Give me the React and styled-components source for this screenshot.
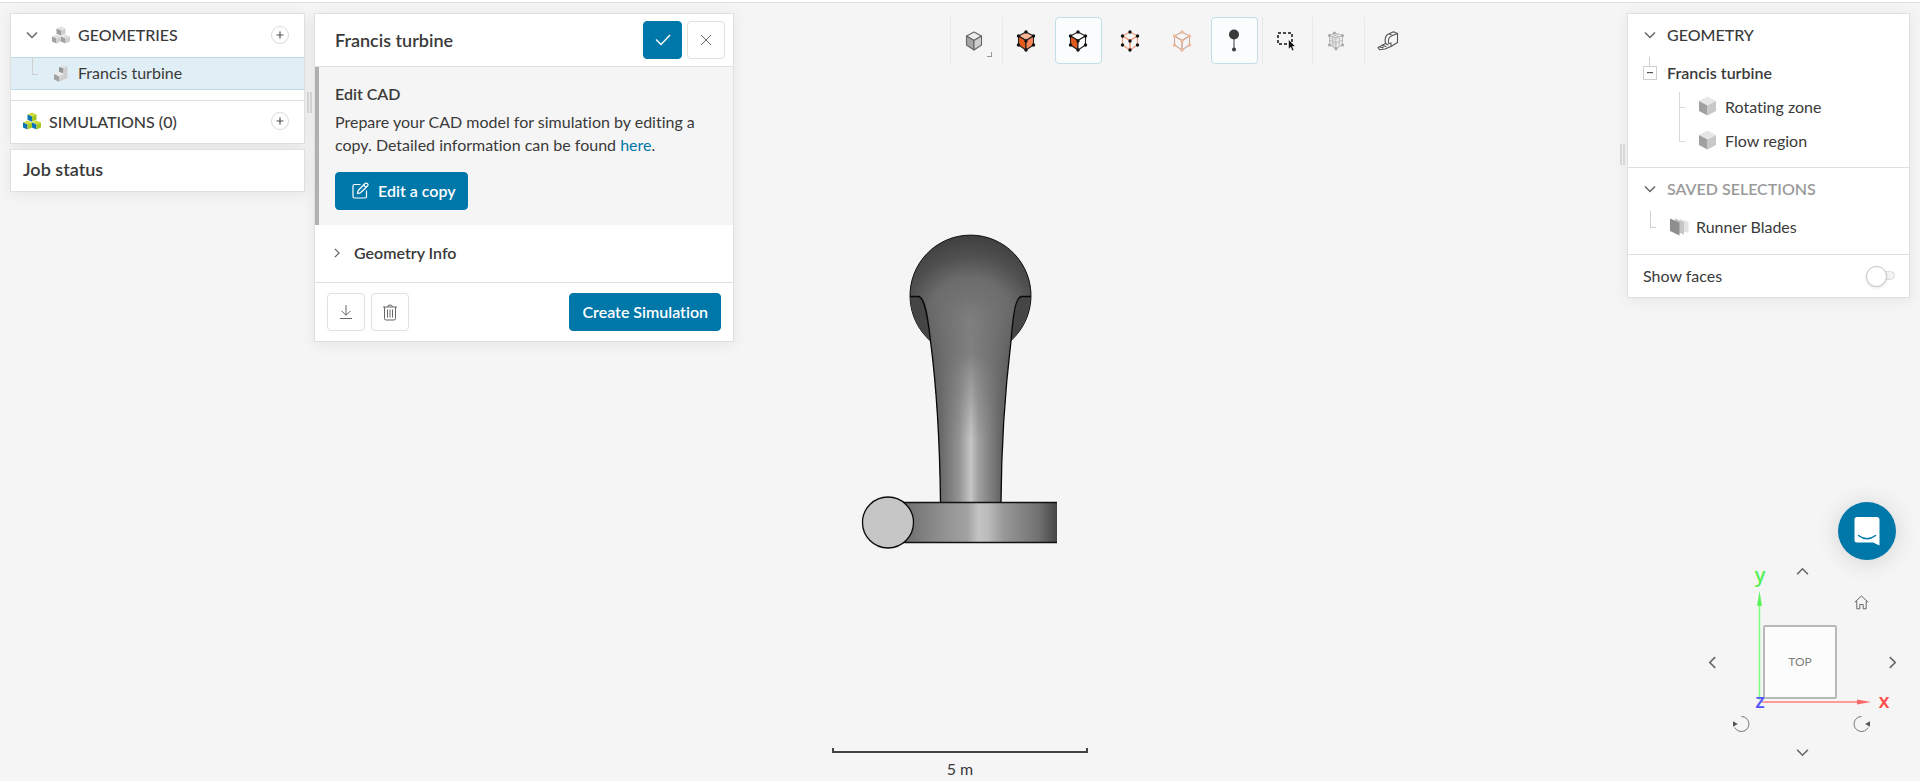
import React, { useState } from 'react'
import styled, { createGlobalStyle, css } from 'styled-components'

const BLUE = '#0077a9'
const TEXT = '#3a3a3a'
const LINE = '#e0e0e0'

const GlobalStyle = createGlobalStyle`
  * { box-sizing: border-box; }
  body {
    margin: 0;
    background: #f5f5f5;
    color: ${TEXT};
    font-family: Lato, sans-serif;
    font-size: 16px;
    line-height: 23px;
    font-variant-ligatures: none;
  }
  button { font: inherit; padding: 0; cursor: pointer; }
  svg { display: block; flex: none; }
`

const Page = styled.div`
  position: relative;
  min-height: 100vh;
  display: flex;
  flex-direction: column;
  overflow: hidden;
`

const TopStrip = styled.header`
  height: 3px;
  background: #fff;
  border-bottom: 1px solid ${LINE};
`

/* 3D viewer, lies under the panels */
const Viewer = styled.div`
  position: absolute;
  inset: 0;
  display: grid;
  place-items: center;
  padding-bottom: 2px;
`

const Scale = styled.div`
  position: absolute;
  left: 50%;
  bottom: 1px;
  width: 256px;
  margin-left: -128px;
  text-align: center;
`

const ScaleBar = styled.div`
  height: 5px;
  margin-bottom: 4px;
  border: 2px solid #444;
  border-top: 0;
`

const Workspace = styled.main`
  position: relative;
  flex: 1;
  display: grid;
  grid-template-columns: 295px 419px minmax(0, 1fr) 283px;
  padding: 10px 10px 19px;
`

const Column = styled.div`
  position: relative;
  display: flex;
  flex-direction: column;
  gap: 5px;
`

const MiddleColumn = styled(Column)`
  margin: 0 -10px 0 9px;
`

const Handle = styled.div`
  position: absolute;
  top: ${(p) => p.$top}px;
  ${(p) => p.$side}: -7px;
  width: 5px;
  height: 21px;
  border: solid #d6d6d6;
  border-width: 0 2px;
`

const Card = styled.section`
  background: #fff;
  border: 1px solid ${LINE};
  box-shadow: 0 2px 14px rgba(0, 0, 0, 0.07);
`

const Row = styled.div`
  display: flex;
  align-items: center;
  height: ${(p) => p.$height || 43}px;
  padding: 0 15px 2px ${(p) => p.$indent || 12}px;
  ${(p) => p.$line && css`border-top: 1px solid ${LINE};`}
  ${(p) => p.$spaced && css`margin-top: ${p.$spaced}px;`}
  ${(p) => p.$selected && css`
    background: #e0eef5;
    border-top: 1px solid #bcdae3;
    border-bottom: 1px solid #bcdae3;
  `}
`

const IconSlot = styled.span`
  display: flex;
  justify-content: center;
  width: ${(p) => p.$width}px;
  flex: none;
`

const Label = styled.span`
  flex: 1;
  font-weight: ${(p) => p.$weight || 400};
  color: ${(p) => p.$color || TEXT};
`

const Heading = styled.h2`
  margin: 0;
  flex: 1;
  font-size: 18px;
  font-weight: 600;
`

const PlusButton = styled.button`
  display: grid;
  place-items: center;
  width: 18px;
  height: 18px;
  background: #fff;
  border: 1px solid #d5dce2;
  border-radius: 50%;
`

const ExpandButton = styled.button`
  display: grid;
  place-items: center;
  width: 14px;
  height: 14px;
  background: #fff;
  border: 1px solid #cfcfcf;
`

const ChevronButton = styled.button`
  display: grid;
  place-items: center;
  width: 14px;
  height: 14px;
  background: none;
  border: 0;
`

/* tree connector: vertical line with a foot */
const Elbow = styled.span`
  align-self: flex-start;
  flex: none;
  width: 6px;
  height: 17px;
  margin-right: ${(p) => p.$gap}px;
  border-left: 1px solid #d0d0d0;
  border-bottom: 1px solid #d0d0d0;
`

const Stem = styled.span`
  position: absolute;
  left: 6px;
  top: -9px;
  height: 9px;
  border-left: 1px solid #d0d0d0;
`

const ExpandSlot = styled.span`
  position: relative;
  width: 24px;
  margin-left: 3px;
`

const Children = styled.div`
  position: relative;
  padding-bottom: 9px;
`

const ChildLine = styled.span`
  position: absolute;
  left: 51px;
  top: 2px;
  width: 6px;
  height: 16px;
  border-left: 1px solid #d8d8d8;
  border-bottom: 1px solid #d8d8d8;
  ${(p) => p.$second && css`height: 50px;`}
`

const PanelHeader = styled.header`
  display: flex;
  align-items: center;
  gap: 5px;
  height: 53px;
  padding: 0 8px 0 20px;
  border-bottom: 1px solid ${LINE};
`

const Button = styled.button`
  display: inline-flex;
  align-items: center;
  justify-content: center;
  gap: 9px;
  min-width: ${(p) => (p.$primary ? 39 : 38)}px;
  height: 38px;
  padding: ${(p) => p.$pad || '0'};
  border-radius: 4px;
  font-weight: 600;
  border: 1px solid ${(p) => (p.$primary ? BLUE : LINE)};
  background: ${(p) => (p.$primary ? BLUE : '#fff')};
  color: ${(p) => (p.$primary ? '#fff' : '#5a5a5a')};
`

const EditBox = styled.div`
  padding: 15px 20px 15px 16px;
  background: #f5f5f5;
  border-left: 4px solid #b0b0b0;
`

const SubTitle = styled.h3`
  margin: 0 0 5px;
  font-size: 16px;
  font-weight: 600;
`

const Text = styled.p`
  margin: 0 0 16px;
`

const Link = styled.a`
  color: ${BLUE};
  text-decoration: none;
`

const InfoToggle = styled.button`
  display: flex;
  align-items: center;
  gap: 12px;
  width: 100%;
  height: 57px;
  padding: 0 0 2px 17px;
  border: 0;
  background: #fff;
  color: ${TEXT};
  font-weight: 600;
`

const PanelFooter = styled.footer`
  display: flex;
  gap: 6px;
  padding: 10px 12px;
  border-top: 1px solid ${LINE};
`

const Spacer = styled.span`
  flex: 1;
`

const Toolbar = styled.nav`
  justify-self: center;
  align-self: start;
  display: flex;
  margin-top: 4px;
  margin-left: 10px;
`

const ToolSlot = styled.span`
  flex: none;
  width: ${(p) => p.$width || 52}px;
  height: 47px;
  border-left: 1px solid ${(p) => (p.$line ? '#e8e8e8' : 'transparent')};
`

const Tool = styled.button`
  position: relative;
  display: grid;
  place-items: center;
  width: 47px;
  height: 47px;
  border: 1px solid ${(p) => (p.$active ? '#c3dde8' : 'transparent')};
  border-radius: 4px;
  background: ${(p) => (p.$active ? '#fafcfd' : 'transparent')};
`

const Corner = styled.i`
  position: absolute;
  right: 5px;
  bottom: 6px;
  width: 5px;
  height: 5px;
  border: solid #999;
  border-width: 0 1px 1px 0;
`

const SwitchLabel = styled.label`
  display: flex;
  align-items: center;
  height: 43px;
  padding: 0 14px 2px 15px;
  border-top: 1px solid ${LINE};
  margin-top: 10px;
`

const Switch = styled.input`
  appearance: none;
  position: relative;
  width: 29px;
  height: 19px;
  margin: 0;
  &::before {
    content: '';
    position: absolute;
    inset: 5px 0 5px 10px;
    border: 1px solid #ddd;
    border-radius: 5px;
    background: #f3f3f3;
  }
  &::after {
    content: '';
    position: absolute;
    left: ${(p) => (p.checked ? 10 : 0)}px;
    top: 0;
    width: 19px;
    height: 19px;
    border: 1px solid #c4c4c4;
    border-radius: 50%;
    background: #fff;
    box-shadow: 0 1px 3px rgba(0, 0, 0, 0.12);
  }
`

const ChatButton = styled.button`
  display: grid;
  place-items: center;
  align-self: flex-end;
  width: 58px;
  height: 58px;
  margin: auto 14px 0 0;
  border: 0;
  border-radius: 50%;
  background: ${BLUE};
  box-shadow: 0 2px 24px rgba(0, 0, 0, 0.14);
`

const Navigator = styled.div`
  position: relative;
  align-self: flex-end;
  display: grid;
  grid-template: 18px 44px 76px 48px 8px / 20px 41px 78px 41px 20px;
  place-items: center;
  margin: -3px 8px 0 0;
  padding-bottom: 6px;
`

const NavButton = styled.button`
  grid-area: ${(p) => p.$area};
  display: grid;
  place-items: center;
  width: 20px;
  height: 20px;
  border: 0;
  background: none;
`

const CubeFace = styled.button`
  grid-area: 3 / 3;
  justify-self: start;
  width: 74px;
  height: 74px;
  padding-bottom: 1px;
  border: 2px solid #b9b9b9;
  border-radius: 2px;
  background: #fcfcfc;
  color: #808080;
  font-size: 12px;
`

const Axes = styled.svg`
  position: absolute;
  inset: 0;
  overflow: visible;
  pointer-events: none;
  font-family: 'Open Sans', sans-serif;
  font-size: 20px;
  font-weight: 600;
`

const Chevron = ({ dir = 'down', size = 12, color = '#666' }) => {
  const paths = { down: 'M1 3.5 6 8.5 11 3.5', up: 'M1 8.5 6 3.5 11 8.5', left: 'M8.5 1 3.5 6 8.5 11', right: 'M3.5 1 8.5 6 3.5 11' }
  return (
    <svg width={size} height={size} viewBox="0 0 12 12" fill="none" stroke={color} strokeWidth="1.5">
      <path d={paths[dir]} />
    </svg>
  )
}

const Plus = () => (
  <svg width="8" height="8" viewBox="0 0 8 8" stroke="#555" strokeWidth="1.200"><path d="M4 .5V7.5M.5 4H7.5" /></svg>
)

const Block = ({ x, y, top, left, right }) => (
  <g transform={`translate(${x} ${y})`}>
    <path fill={top} d="M0 2 4.5 0 9 2 4.5 4Z" />
    <path fill={left} d="M0 2 4.5 4V9.2L0 7.2Z" />
    <path fill={right} d="M9 2 4.5 4V9.2L9 7.2Z" />
  </g>
)

const Blocks = ({ top, left, right }) => (
  <svg width="18" height="18" viewBox="0 0 18 18">
    <Block x={4.5} y={0.5} top={top} left={left} right={right} />
    <Block x={0} y={8.4} top={top} left={left} right={right} />
    <Block x={9} y={8.4} top={top} left={left} right={right} />
  </svg>
)

const PartIcon = () => (
  <svg width="14" height="18" viewBox="0 0 14 18">
    <path fill="#e4e4e4" d="M5 3 9.500 1 13.500 2.300 9.500 4.300Z" />
    <path fill="#969696" d="M5 3 9.500 4.300V9.500L5 8Z" />
    <path fill="#d0d0d0" d="M9.500 4.300 13.500 2.300V14L5 17.700V12.500L9.500 10Z" />
    <path fill="#ececec" d="M0 10 5 8 9.500 9.800 5 12.200Z" />
    <path fill="#a2a2a2" d="M0 10 5 12.200V17.700L0 15.500Z" />
  </svg>
)

const SolidCube = () => (
  <svg width="17" height="20" viewBox="0 0 17 20">
    <path fill="#e6e6e6" d="M8.500 .5 17 5 8.500 9.500 0 5Z" />
    <path fill="#a0a0a0" d="M0 5 8.500 9.500V19.500L0 15Z" />
    <path fill="#c8c8c8" d="M17 5 8.500 9.500V19.500L17 15Z" />
  </svg>
)

const FacesIcon = () => (
  <svg width="19" height="18" viewBox="0 0 19 18">
    <path fill="#e2e2e2" d="M10 1 18.500 4V15L10 12Z" />
    <path fill="#c6c6c6" d="M5 .5 14 4V16.500L5 13Z" />
    <path fill="#8e8e8e" d="M0 .5 9.500 4.500V17.500L0 13Z" />
  </svg>
)

const nodes = [[10, 2], [17.5, 6], [17.5, 15], [10, 20], [2.5, 15], [2.5, 6], [10, 11]]

const NodeCube = ({ top = 'none', left = 'none', right = 'none', stroke, node }) => (
  <svg width="20" height="22" viewBox="0 0 20 22" strokeWidth="1.100" stroke={stroke} strokeLinejoin="round">
    <path fill={top} d="M10 2 17.500 6 10 10.500 2.500 6Z" />
    <path fill={left} d="M2.500 6 10 10.500V20L2.500 15Z" />
    <path fill={right} d="M17.500 6 10 10.500V20L17.500 15Z" />
    {node && nodes.map(([x, y]) => <circle key={x + '-' + y} cx={x} cy={y} r="1.7" fill={node} stroke="none" />)}
  </svg>
)

const PinIcon = () => (
  <svg width="12" height="23" viewBox="0 0 12 23" fill="#3a3a3a">
    <circle cx="6" cy="5.500" r="5" />
    <path d="M5.500 8H6.500V20H5.500Z" />
    <circle cx="6" cy="20.500" r="2" />
  </svg>
)

const BoxSelectIcon = () => (
  <svg width="20" height="20" viewBox="0 0 20 20">
    <rect x="2" y="2" width="14" height="11" fill="none" stroke="#111" strokeWidth="1.500" strokeDasharray="3 2" />
    <path fill="#111" stroke="#f5f5f5" strokeWidth=".6" d="M12.500 8.500V18L14.700 16.200 16.200 19.700 17.900 18.900 16.400 15.600 19.300 15.300Z" />
  </svg>
)

const MeshIcon = () => (
  <svg width="18" height="20" viewBox="0 0 18 20" fill="none" stroke="#bcbcbc">
    <path fill="#e2e2e2" d="M2.500 4.500 9 7V17.500L2.500 14Z" />
    <path fill="#ededed" d="M9 7 15.500 4.500V14L9 17.500Z" />
    <path d="M2.500 4.500 7.500 2 15.500 4.500M5 3.200 12 6M11.500 3.200 5.800 6M2.500 9 9 12 15.500 9M5.800 6V15.700M12.200 6V15.700" />
    <g fill="#aaa" stroke="none">
      <circle cx="7.500" cy="2" r="1.600" /><circle cx="15.500" cy="4.500" r="1.600" /><circle cx="2.500" cy="4.500" r="1.600" />
      <circle cx="15.500" cy="14" r="1.600" /><circle cx="2.500" cy="14" r="1.600" /><circle cx="9" cy="17.700" r="1.600" />
    </g>
  </svg>
)

/* tape measure: case on the right, strip running out to the lower left */
const TapeIcon = () => (
  <svg width="22" height="20" viewBox="0 0 22 20" fill="none" stroke="#555" strokeWidth="1.100" strokeLinejoin="round">
    <path d="M8.500 12.500Q7 4.500 12 2.800L16.500 .8 20.500 2.500V11.500L14 15.500" />
    <path d="M20.500 2.500 15.500 4.500Q10.500 6 11.500 12.500M12 2.800 15.500 4.500M14 15.500V12L11.500 12.500" />
    <path d="M8.500 12.500 1 16.500 2.500 18.800 8 18 14 15.500M3 16.200 6.500 16.600M5.500 14.600 9.500 15.500M8.500 12.500 11.500 14" />
  </svg>
)

const PencilBox = () => (
  <svg width="17" height="17" viewBox="0 0 17 17" fill="none" stroke="#fff" strokeWidth="1.200" strokeLinejoin="round">
    <path d="M8.500 2.500H2.500Q1 2.500 1 4V14.500Q1 16 2.500 16H13Q14.500 16 14.500 14.500V8.500" />
    <path d="M5.500 11.500 6.200 8.500 13 1.500Q14.200 .5 15.500 1.600 16.600 2.800 15.500 4L8.500 10.800ZM11.700 3 14 5.400" />
  </svg>
)

const Download = () => (
  <svg width="14" height="16" viewBox="0 0 14 16" fill="none" stroke="#666"><path d="M7 1V11M2.500 6.800 7 11.300 11.500 6.800M1 14.500H13" /></svg>
)

const Trash = () => (
  <svg width="14" height="17" viewBox="0 0 14 17" fill="none" stroke="#666">
    <path d="M0 3H14M4.500 3Q4.500 1 7 1 9.500 1 9.500 3M1.500 3V14.500Q1.500 16 3 16H11Q12.500 16 12.500 14.500V3M4.500 5.500V13.500M7 5.500V13.500M9.500 5.500V13.500" />
  </svg>
)

const Home = () => (
  <svg width="15" height="15" viewBox="0 0 15 15" fill="none" stroke="#666">
    <path d="M.7 7.300 7.500 1 14.300 7.300M2.800 6V13.800H5.800V9.500H9.200V13.800H12.200V6" />
  </svg>
)

const Rotate = ({ flip }) => (
  <svg width="20" height="18" viewBox={flip ? '-1 0 20 18' : '1 0 20 18'} fill="none" stroke="#777">
    <g transform={flip ? 'translate(18 0) scale(-1 1)' : undefined}>
      <path d="M9.500 1.500A7.500 7.500 0 1 1 2.800 12.500" />
      <path fill="#555" stroke="none" d="M1 6.300 5.800 9 1 11.700Z" />
    </g>
  </svg>
)

const ChatIcon = () => (
  <svg width="26" height="30" viewBox="0 0 26 30">
    <path fill="#fff" d="M3 1H22.500Q25.500 1 25.500 4V29.500L19 26.500H3Q.5 26.500 .5 24V3.500Q.5 1 3 1Z" />
    <path fill="none" stroke={BLUE} strokeWidth="1.500" strokeLinecap="round" d="M4.500 19.500Q13 26 21.500 19.500" />
  </svg>
)

const Turbine = () => (
  <svg width="200" height="320" viewBox="0 0 200 320">
    <defs>
      <radialGradient id="dome" gradientUnits="userSpaceOnUse" cx="111" cy="92" r="88">
        <stop offset="0" stopColor="#7c7c7c" />
        <stop offset=".5" stopColor="#6c6c6c" />
        <stop offset=".75" stopColor="#505050" />
        <stop offset="1" stopColor="#3e3e3e" />
      </radialGradient>
      <linearGradient id="tube">
        <stop offset="0" stopColor="#505050" />
        <stop offset=".22" stopColor="#6c6c6c" />
        <stop offset=".5" stopColor="#868686" />
        <stop offset=".78" stopColor="#6c6c6c" />
        <stop offset="1" stopColor="#505050" />
      </linearGradient>
      <linearGradient id="shine" gradientUnits="userSpaceOnUse" x1="81" x2="142" y1="0" y2="0">
        <stop offset="0" stopColor="#686868" />
        <stop offset=".3" stopColor="#929292" />
        <stop offset=".5" stopColor="#c6c6c6" />
        <stop offset=".62" stopColor="#a0a0a0" />
        <stop offset="1" stopColor="#626262" />
      </linearGradient>
      <linearGradient id="fade" x2="0" y2="1">
        <stop offset=".3" stopColor="#000" />
        <stop offset=".7" stopColor="#fff" />
      </linearGradient>
      <linearGradient id="dark" x2="0" y2="1">
        <stop offset="0" stopColor="#000" />
        <stop offset=".35" stopColor="#fff" />
      </linearGradient>
      <mask id="low"><rect x="50" y="60" width="130" height="214" fill="url(#fade)" /></mask>
      <mask id="mid"><rect x="50" y="66" width="130" height="207" fill="url(#dark)" /></mask>
      <linearGradient id="casing">
        <stop offset="0" stopColor="#6a6a6a" />
        <stop offset=".25" stopColor="#8e8e8e" />
        <stop offset=".43" stopColor="#a2a2a2" />
        <stop offset=".5" stopColor="#c4c4c4" />
        <stop offset=".56" stopColor="#bcbcbc" />
        <stop offset=".66" stopColor="#989898" />
        <stop offset=".88" stopColor="#727272" />
        <stop offset="1" stopColor="#454545" />
      </linearGradient>
    </defs>
    <g transform="translate(-.5 0)">
      <path fill="url(#dome)" stroke="#111" d="M71 111A60.500 60.500 0 1 1 151 111Z" />
      <path fill="#454545" d="M50.500 66.500H60Q66 69 71 111 52 94 50.500 66.500ZM171 66.500H162Q155 69 151.500 111 169 94 171 66.500Z" />
      <path fill="url(#dome)" d="M63 70Q68 80 71 111 80 180 81 273H141.500Q141 190 151.500 111 154 80 159 70Z" />
      <path fill="url(#tube)" mask="url(#mid)" d="M60 66.500Q66 69 71 111 80 180 81 273H141.500Q141 190 151.500 111 155 69 162 66.500Z" />
      <path fill="url(#shine)" mask="url(#low)" d="M71 111Q80 180 81 273H141.500Q141 190 151.500 111Z" />
      <path fill="none" stroke="#080808" strokeWidth="1.300" d="M50.500 66.500H59C66 67 69 93 71 111Q80 180 81 273M171.500 66.500H162C155 67 153 93 151.500 111Q142 190 141.500 273" />
    </g>
    <rect x="40" y="272.500" width="157" height="40" fill="url(#casing)" />
    <path stroke="#111" strokeWidth="1.300" d="M40 272.500H197M40 312.500H197" />
    <circle cx="28" cy="292.500" r="25.500" fill="#c6c6c6" stroke="#0a0a0a" strokeWidth="1.300" />
  </svg>
)

const tools = [
  { name: 'View mode', line: true, corner: true, icon: <NodeCube top="#ededed" left="#a5a5a5" right="#cfcfcf" stroke="#666" /> },
  { name: 'Volumes', line: true, icon: <NodeCube top="#f9b597" left="#e65a1e" right="#f7865a" stroke="#222" node="#111" /> },
  { name: 'Faces', active: true, icon: <NodeCube top="#fff" left="#e2591f" right="#fff" stroke="#222" node="#111" /> },
  { name: 'Edges', icon: <NodeCube stroke="#ec9b78" node="#111" /> },
  { name: 'Vertices', icon: <NodeCube stroke="#cfaa9b" node="#f0b89c" /> },
  { name: 'Probe', active: true, icon: <PinIcon /> },
  { name: 'Box select', line: true, width: 50, icon: <BoxSelectIcon /> },
  { name: 'Mesh', line: true, icon: <MeshIcon /> },
  { name: 'Measure', line: true, width: 48, icon: <TapeIcon /> },
]

const App = () => {
  const [showFaces, setShowFaces] = useState(false)

  return (
    <Page>
      <GlobalStyle />
      <TopStrip />
      <Viewer>
        <Turbine />
        <Scale>
          <ScaleBar />
          5 m
        </Scale>
      </Viewer>

      <Workspace>
        <Column>
          <Card>
            <Row $indent={14}>
              <ChevronButton aria-label="Collapse geometries"><Chevron /></ChevronButton>
              <IconSlot $width={5} />
              <IconSlot $width={34}><Blocks top="#e2e2e2" left="#a0a0a0" right="#cfcfcf" /></IconSlot>
              <Label $weight={500}>GEOMETRIES</Label>
              <PlusButton aria-label="Add geometry"><Plus /></PlusButton>
            </Row>
            <Row $height={33} $indent={21} $selected>
              <Elbow $gap={16} />
              <IconSlot $width={14}><PartIcon /></IconSlot>
              <IconSlot $width={10} />
              <Label>Francis turbine</Label>
            </Row>
            <Row $line $spaced={10}>
              <IconSlot $width={18}><Blocks top="#d3dc3c" left="#0b72b5" right="#a3c81e" /></IconSlot>
              <IconSlot $width={8} />
              <Label $weight={500}>SIMULATIONS (0)</Label>
              <PlusButton aria-label="Add simulation"><Plus /></PlusButton>
            </Row>
          </Card>
          <Card>
            <Row $height={41}>
              <Heading>Job status</Heading>
            </Row>
          </Card>
          <Handle $side="right" $top={79} />
        </Column>

        <MiddleColumn>
          <Card>
            <PanelHeader>
              <Heading>Francis turbine</Heading>
              <Button $primary aria-label="Apply">
                <svg width="16" height="12" viewBox="0 0 16 12" fill="none" stroke="#fff" strokeWidth="1.400"><path d="M1 5.500 6 10.500 15 1" /></svg>
              </Button>
              <Button aria-label="Close">
                <svg width="12" height="12" viewBox="0 0 12 12" stroke="#666"><path d="M1 1 11 11M11 1 1 11" /></svg>
              </Button>
            </PanelHeader>
            <EditBox>
              <SubTitle>Edit CAD</SubTitle>
              <Text>
                Prepare your CAD model for simulation by editing a copy. Detailed information can be found <Link href="#here">here</Link>.
              </Text>
              <Button $primary $pad="0 11px 2px 16px"><PencilBox />Edit a copy</Button>
            </EditBox>
            <InfoToggle>
              <Chevron dir="right" size={10} />
              Geometry Info
            </InfoToggle>
            <PanelFooter>
              <Button aria-label="Download"><Download /></Button>
              <Button aria-label="Delete"><Trash /></Button>
              <Spacer />
              <Button $primary $pad="0 12px 2px">Create Simulation</Button>
            </PanelFooter>
          </Card>
        </MiddleColumn>

        <Toolbar>
          {tools.map((t) => (
            <ToolSlot key={t.name} $line={t.line} $width={t.width}>
              <Tool aria-label={t.name} $active={t.active}>
                {t.icon}
                {t.corner && <Corner />}
              </Tool>
            </ToolSlot>
          ))}
        </Toolbar>

        <Column>
          <Card>
            <Row $indent={15}>
              <ChevronButton aria-label="Collapse geometry"><Chevron /></ChevronButton>
              <IconSlot $width={10} />
              <Label $weight={500}>GEOMETRY</Label>
            </Row>
            <Row $height={33}>
              <ExpandSlot>
                <Stem />
                <ExpandButton aria-label="Collapse Francis turbine">
                  <svg width="6" height="2" viewBox="0 0 6 2"><path fill="#555" d="M0 0H6V1.200H0Z" /></svg>
                </ExpandButton>
              </ExpandSlot>
              <Label $weight={600}>Francis turbine</Label>
            </Row>
            <Children>
              <ChildLine />
              <ChildLine $second />
              <Row $height={34} $indent={71}>
                <SolidCube />
                <IconSlot $width={9} />
                <Label>Rotating zone</Label>
              </Row>
              <Row $height={34} $indent={71}>
                <SolidCube />
                <IconSlot $width={9} />
                <Label>Flow region</Label>
              </Row>
            </Children>
            <Row $line $height={44} $indent={15}>
              <ChevronButton aria-label="Collapse saved selections"><Chevron /></ChevronButton>
              <IconSlot $width={10} />
              <Label $weight={600} $color="#9a9a9a">SAVED SELECTIONS</Label>
            </Row>
            <Row $height={33} $indent={22}>
              <Elbow $gap={14} />
              <FacesIcon />
              <IconSlot $width={7} />
              <Label>Runner Blades</Label>
            </Row>
            <SwitchLabel>
              <Label>Show faces</Label>
              <Switch type="checkbox" role="switch" checked={showFaces} onChange={(e) => setShowFaces(e.target.checked)} />
            </SwitchLabel>
          </Card>
          <Handle $side="left" $top={131} />

          <ChatButton aria-label="Open chat"><ChatIcon /></ChatButton>
          <Navigator>
            <NavButton $area="1 / 3" aria-label="Tilt up"><Chevron dir="up" size={13} /></NavButton>
            <NavButton $area="2 / 4" aria-label="Home view"><Home /></NavButton>
            <NavButton $area="3 / 1" aria-label="Turn left"><Chevron dir="left" size={13} /></NavButton>
            <CubeFace>TOP</CubeFace>
            <NavButton $area="3 / 5" aria-label="Turn right"><Chevron dir="right" size={13} /></NavButton>
            <NavButton $area="4 / 2" aria-label="Rotate left"><Rotate /></NavButton>
            <NavButton $area="4 / 4" aria-label="Rotate right"><Rotate flip /></NavButton>
            <NavButton $area="5 / 3" aria-label="Tilt down"><Chevron dir="down" size={13} /></NavButton>
            <Axes width="200" height="200" viewBox="0 0 200 200" textAnchor="middle">
              <path stroke="#7dff7d" strokeWidth="1.500" d="M57.500 138V40" />
              <path fill="#5df55d" d="M57.500 29 60 44H55Z" />
              <path stroke="#ff7d7d" strokeWidth="1.500" d="M60 140H160" />
              <path fill="#fa6a6a" d="M169 140 155 137.500V142.500Z" />
              <text x="58" y="20" fill="#55f055">y</text>
              <text x="182" y="146" fill="#ff4d4d">x</text>
              <text x="58" y="146" fill="#5555ff">z</text>
            </Axes>
          </Navigator>
        </Column>
      </Workspace>
    </Page>
  )
}

export default App
